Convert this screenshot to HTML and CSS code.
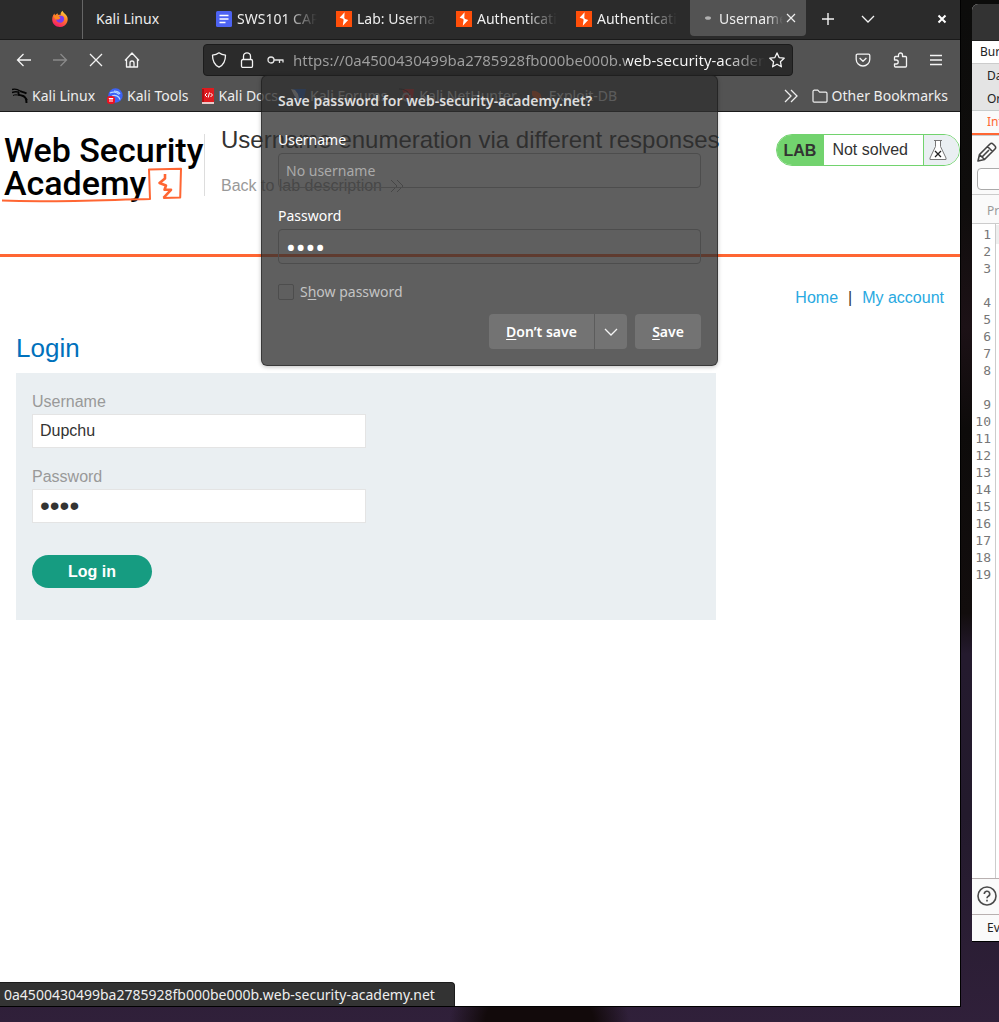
FILE: index.html
```
<!DOCTYPE html>
<html lang="en">
<head>
<meta charset="utf-8">
<title>Username enumeration via different responses</title>
<link rel="stylesheet" href="styles.css">
</head>
<body>
<svg class="defs" width="0" height="0" aria-hidden="true">
  <defs>
    <linearGradient id="fox" x1="0.8" y1="0" x2="0.3" y2="1"><stop offset="0" stop-color="#ffd93b"/><stop offset="0.45" stop-color="#ff7a2a"/><stop offset="1" stop-color="#f5156c"/></linearGradient>
    <symbol id="burp" viewBox="0 0 16 16"><rect width="16" height="16" fill="#ff4f0a"/><path d="M8.600 1.200 3.600 6.800l3.300.9.700 1-.8 6.100 5.400-5.800-3-.9-.9-1z" fill="#fff"/></symbol>
  </defs>
</svg>
<div class="desktop">
  <div class="browser">
    <div class="tabbar">
      <button class="pinned" aria-label="Firefox View">
        <svg width="18" height="18" viewBox="0 0 18 18"><path d="M9 17C4.500 17 1.200 13.800 1.200 9.500c0-2.500.8-4.500 2.200-6l.6 1.800 2.500-2 .5 1.600c.8-.2 1.700-.1 2.500.2C9.500 3.500 10 2 11.500.8c.3 2 3 3 4.300 5.200 1.200 2 1.100 4.300.3 6.300C14.900 15.200 12.300 17 9 17z" fill="url(#fox)"/><path d="M12.800 7.200c1 2.800-.7 5.600-3.600 5.600-2.300 0-4-1.500-4-3.500l2.500.1 1.600-1.600-1.500-1.600c2-.8 4-.3 5 1z" fill="#7a3cf0"/><path d="M2.200 5.600c1.800 0 3.200.2 5.600.6L9.400 8 7.500 9.300l-3 .3z" fill="#ff8a1f"/></svg>
      </button>
      <div class="tabs">
        <button class="tab"><span class="tab-title">Kali Linux</span></button>
        <button class="tab"><svg width="16" height="16" viewBox="0 0 16 16"><rect width="16" height="16" rx="1.500" fill="#4d63f2"/><path d="M3.500 4.500h9M3.500 8h9M3.500 11.500h6" stroke="#fff" stroke-width="1.600"/></svg><span class="tab-title">SWS101 CAP</span></button>
        <button class="tab"><svg width="16" height="16"><use href="#burp"/></svg><span class="tab-title">Lab: Username</span></button>
        <button class="tab"><svg width="16" height="16"><use href="#burp"/></svg><span class="tab-title">Authentication</span></button>
        <button class="tab"><svg width="16" height="16"><use href="#burp"/></svg><span class="tab-title">Authentication</span></button>
      </div>
      <div class="tab-active">
        <svg width="16" height="16" viewBox="0 0 16 16"><ellipse cx="8" cy="8" rx="3" ry="1.800" fill="#b0b0b0"/></svg>
        <span class="tab-title">Username</span>
        <button class="icon" aria-label="Close tab"><svg width="10" height="10" viewBox="0 0 10 10"><path d="M1 1l8 8M9 1 1 9" stroke="#eee" stroke-width="1.200"/></svg></button>
      </div>
      <button class="icon new-tab" aria-label="New tab"><svg width="14" height="14" viewBox="0 0 14 14"><path d="M7 1v12M1 7h12" stroke="#f4f4f4" stroke-width="1.400"/></svg></button>
      <button class="icon" aria-label="List tabs"><svg width="14" height="14" viewBox="0 0 14 14"><path d="M1 4l6 6 6-6" fill="none" stroke="#f4f4f4" stroke-width="1.300"/></svg></button>
      <button class="icon close-window" aria-label="Close window"><svg width="10" height="10" viewBox="0 0 10 10"><path d="M1.500 1.500l7 7M8.500 1.500l-7 7" stroke="#fff" stroke-width="2"/></svg></button>
    </div>
    <div class="toolbar">
      <div class="nav-buttons">
        <button class="icon" aria-label="Back"><svg width="16" height="16" viewBox="0 0 16 16" fill="none" stroke="#f4f4f4" stroke-width="1.300"><path d="M15 8H1.500M7.500 2l-6 6 6 6"/></svg></button>
        <button class="icon" aria-label="Forward"><svg width="16" height="16" viewBox="0 0 16 16" fill="none" stroke="#8a8a8a" stroke-width="1.300"><path d="M1 8h13.500M8.500 2l6 6-6 6"/></svg></button>
        <button class="icon" aria-label="Stop"><svg width="16" height="16" viewBox="0 0 16 16" stroke="#f4f4f4" stroke-width="1.300"><path d="M2 2l12 12M14 2 2 14"/></svg></button>
        <button class="icon" aria-label="Home"><svg width="16" height="16" viewBox="0 0 16 16" fill="none" stroke="#f4f4f4" stroke-width="1.300" stroke-linejoin="round"><path d="M1 8.500 8 1l7 7.500M2.500 7v8h11V7M6 15v-4a2 2 0 0 1 4 0v4"/></svg></button>
      </div>
      <div class="urlbar">
        <svg width="16" height="16" viewBox="0 0 16 16" fill="none" stroke="#f4f4f4" stroke-width="1.300" stroke-linejoin="round"><path d="M8 .8c2 1.600 4 2.200 6.500 2.400 0 5.300-1.500 9.500-6.500 12-5-2.500-6.500-6.700-6.500-12C4 3 6 2.400 8 .8z"/></svg>
        <svg width="16" height="16" viewBox="0 0 16 16" fill="none" stroke="#f4f4f4" stroke-width="1.300"><rect x="2.500" y="7.500" width="11" height="8" rx="1.500"/><path d="M4.500 7.500V4.300a3.500 3.500 0 0 1 7 0v3.200"/></svg>
        <svg width="17" height="16" viewBox="0 0 17 16" fill="none" stroke="#e4e4e4" stroke-width="1.300"><circle cx="4" cy="8" r="3"/><path d="M7 8h9.500M12.500 8v3M16 8v2.500"/></svg>
        <input class="url" type="text" aria-label="Address" value="https://0a4500430499ba2785928fb000be000b.web-security-academy.net/login">
        <button class="icon star" aria-label="Bookmark this page"><svg width="16" height="16" viewBox="0 0 16 16" fill="none" stroke="#f4f4f4" stroke-width="1.300" stroke-linejoin="round"><path d="M8 .9l2.100 4.700 5.100.6-3.800 3.500 1 5.100L8 12.200l-4.400 2.600 1-5.100L.8 6.200l5.100-.6z"/></svg></button>
      </div>
      <div class="tool-icons">
        <button class="icon" aria-label="Pocket"><svg width="16" height="16" viewBox="0 0 16 16" fill="none" stroke="#f4f4f4" stroke-width="1.300" stroke-linejoin="round"><path d="M2.500 2.200h11c.7 0 1.300.5 1.300 1.200v3.800a6.800 6.800 0 0 1-13.600 0V3.400c0-.7.600-1.200 1.300-1.200zM4.600 6 8 9.300 11.400 6"/></svg></button>
        <button class="icon" aria-label="Extensions"><svg width="16" height="16" viewBox="0 0 16 16" fill="none" stroke="#f4f4f4" stroke-width="1.300" stroke-linejoin="round"><path d="M2.500 8V5.500a1 1 0 0 1 1-1h3V3a2 2 0 0 1 4 0v1.500h3a1 1 0 0 1 1 1V14a1 1 0 0 1-1 1h-10a1 1 0 0 1-1-1v-2h1.700a2 2 0 0 0 0-4z"/></svg></button>
        <button class="icon" aria-label="Menu"><svg width="14" height="14" viewBox="0 0 14 14" stroke="#f4f4f4" stroke-width="1.300"><path d="M1 2.500h12M1 7h12M1 11.500h12"/></svg></button>
      </div>
    </div>
    <div class="bookmarks">
      <a href="#" class="bm"><svg width="16" height="16" viewBox="0 0 16 16" fill="none" stroke="#050505"><path stroke-width="1.400" d="M0 1.500c3-.8 5.500-.4 8 1.500M0 4.500c3-1.200 5-.9 7-.3"/><path stroke-width="1.900" d="M8 3.200c2 .8 4 .6 6.500 2.300M7 4c-1.500 2 0 3.200 2.500 3.400 3.500.4 5 2.600 5 7.600"/><path d="M9 7.500c2.500 2 5 1.500 6.500 4M1 7.500c2-1 4-.8 6 0"/></svg>Kali Linux</a>
      <a href="#" class="bm"><svg width="16" height="16" viewBox="0 0 16 16"><circle cx="8.500" cy="7.500" r="7.200" fill="#3d63f5"/><path d="M3 5c3-1.500 7-1 9 1.500M5 8c3-1.500 7 0 8 3.500M7 3c3 0 5 1 6 3" stroke="#b7d8ff" stroke-width="1.200" fill="none"/><rect y="8" width="8" height="8" rx="3" fill="#ee1020"/><path d="M1.800 10.500h4.400M3 10.500v3.500M5 10.500v3.500" stroke="#fff"/></svg>Kali Tools</a>
      <a href="#" class="bm"><svg width="14" height="16" viewBox="0 0 14 16"><path d="M1 0h12v14H1z" fill="#e01b1f"/><path d="M1 14h12v2H1z" fill="#e9c9c9"/><path d="M1 1h2v13H1z" fill="#b01014"/><path d="M6 5 4 7l2 2M9.500 5l2 2-2 2M8.500 4.500l-1.300 5" stroke="#fff" fill="none"/></svg>Kali Docs</a>
      <a href="#" class="bm"><svg width="16" height="16" viewBox="0 0 16 16"><path d="M3 1h13l-3 14H5z" fill="#2864c8"/><path d="M1 1l4 1 3 4 1 5 3 4-5-4-3-4z" fill="#e6e6e6"/></svg>Kali Forums</a>
      <a href="#" class="bm"><svg width="16" height="16" viewBox="0 0 16 16"><path d="M3 1h12l-1 9-6 4z" fill="#d82a2a"/><circle cx="7.500" cy="9" r="3.500" stroke="#bbb" stroke-width="2" fill="none"/><path d="M0 1c5 0 9 2 11 6" stroke="#222" fill="none"/></svg>Kali NetHunter</a>
      <a href="#" class="bm"><svg width="16" height="16" viewBox="0 0 16 16"><path d="M3 3c3-1 7 1 9 4l1 5C9 13 5 10 3 7z" fill="#ef5b20"/></svg>Exploit-DB</a>
      <div class="bm-end">
        <button class="icon" aria-label="More bookmarks"><svg width="14" height="14" viewBox="0 0 14 14" fill="none" stroke="#eee" stroke-width="1.300"><path d="M1 1l6 6-6 6M7 1l6 6-6 6"/></svg></button>
        <a href="#" class="bm"><svg width="16" height="16" viewBox="0 0 16 16" fill="none" stroke="#eee" stroke-width="1.200" stroke-linejoin="round"><path d="M1 13V3.500a1.300 1.300 0 0 1 1.300-1.300h3.500l1.800 2h6.200A1.300 1.300 0 0 1 15 5.500V13a1.200 1.200 0 0 1-1.200 1.200H2.200A1.200 1.200 0 0 1 1 13z"/></svg>Other Bookmarks</a>
      </div>
    </div>
    <main class="page">
      <header class="lab-header">
        <div class="logo">
          <div class="logo-text">Web Security<br>Academy</div>
          <svg class="logo-mark" width="184" height="44" viewBox="0 0 184 44" fill="none" stroke="#ff6633" stroke-width="2" stroke-linejoin="round"><path d="M1 38.500c50 2 100-.5 148-1.500L148 7.500l32-.8-.8 28.800-17 .6"/><path stroke-width="2.600" d="M164 12v4.500l-5.500 4.500 6.500 2.500-1.500 4.300h6.500l-7.500 8"/></svg>
        </div>
        <div class="lab-title">
          <h1>Username enumeration via different responses</h1>
          <a href="#">Back to lab description <svg width="14" height="12" viewBox="0 0 14 12" fill="none" stroke="#999"><path d="M1 0l6 6-6 6M7 0l6 6-6 6"/></svg></a>
        </div>
        <div class="lab-status">
          <span class="lab-tag">LAB</span>
          <span class="lab-state">Not solved</span>
          <span class="lab-flask"><svg width="18" height="22" viewBox="0 0 18 22" fill="#fff" stroke="#777"><path d="M5 1.500h8M6.500 1.500v6L1 19v1.500h16V19L11.500 7.500v-6"/><path d="M6 12l6 6M12 12l-6 6" stroke="#222" stroke-width="1.300"/></svg></span>
        </div>
      </header>
      <nav class="links"><a href="#">Home</a><span>|</span><a href="#">My account</a></nav>
      <section class="login">
        <h2>Login</h2>
        <form class="login-form">
          <label for="user">Username</label>
          <input id="user" type="text" value="Dupchu">
          <label for="pass">Password</label>
          <input id="pass" type="password" value="abcd">
          <button type="button">Log in</button>
        </form>
      </section>
    </main>
    <div class="statusbar">0a4500430499ba2785928fb000be000b.web-security-academy.net</div>
    <div class="popover" role="dialog" aria-labelledby="pop-title">
      <div class="pop-title" id="pop-title">Save password for web-security-academy.net?</div>
      <label for="pop-user">Username</label>
      <input class="pop-input" id="pop-user" type="text" placeholder="No username">
      <label for="pop-pass">Password</label>
      <input class="pop-input" id="pop-pass" type="password" value="abcd">
      <label class="show"><input type="checkbox"><span>S<u>h</u>ow password</span></label>
      <div class="pop-actions">
        <button class="dont"><span><u>D</u>on’t save</span></button>
        <button class="more" aria-label="More options"><svg width="14" height="14" viewBox="0 0 14 14"><path d="M1 4l6 6 6-6" fill="none" stroke="#f4f4f4" stroke-width="1.300"/></svg></button>
        <button class="save"><span><u>S</u>ave</span></button>
      </div>
    </div>
  </div>
  <div class="burp">
    <div class="burp-title"></div>
    <div class="burp-menu">Burp</div>
    <div class="burp-tabs"><span>Dashboard</span><span>Organizer</span></div>
    <div class="burp-tab-active">Intruder</div>
    <div class="burp-tools">
      <svg width="20" height="20" viewBox="0 0 20 20" fill="none" stroke="#444" stroke-width="1.600" stroke-linejoin="round"><path d="M1 19l1.500-6.500L13 2a2 2 0 0 1 3 0l2 2a2 2 0 0 1 0 3L7.500 17.500zM10.500 4.500l5 5M2.500 12.500l5 5M5.500 14.500 12 8"/></svg>
      <input type="text" aria-label="Target">
    </div>
    <div class="burp-view">Pretty</div>
    <div class="editor">
      <ol class="gutter">
        <li>1</li><li>2</li><li class="wrapped">3</li><li>4</li><li>5</li><li>6</li><li>7</li><li class="wrapped">8</li><li>9</li><li>10</li><li>11</li><li>12</li><li>13</li><li>14</li><li>15</li><li>16</li><li>17</li><li>18</li><li>19</li>
      </ol>
      <div class="code"></div>
    </div>
    <div class="burp-help"><svg width="20" height="20" viewBox="0 0 20 20" fill="none" stroke="#4a4a4a" stroke-width="1.600"><circle cx="10" cy="10" r="9"/><path d="M7.300 8a2.700 2.700 0 1 1 4 2.300c-.9.500-1.300.9-1.300 1.900M10 13.800v1.600"/></svg></div>
    <div class="burp-foot">Event log</div>
  </div>
</div>
</body>
</html>
```
FILE: styles.css
```
* { box-sizing: border-box; }
body { margin: 0; font-family: "Noto Sans", sans-serif; font-size: 14px; }
button { border: 0; padding: 0; background: none; font: inherit; color: inherit; }
a { text-decoration: none; color: inherit; }
svg { display: block; flex: none; }
.defs { position: absolute; }

.desktop {
  display: flex;
  gap: 11px;
  min-height: 100vh;
  overflow: hidden;
  background:
    radial-gradient(ellipse 90px 60px at 54% 100%, #120a0b 60%, transparent),
    linear-gradient(#0c0c0b 0, #0f0d0c 20%, #1c1116 32%, #0d0b0a 42%, #120d0d 60%, #241a2e 64%, #231a2c 80%, #30203a 100%);
}

.browser {
  position: relative;
  flex: 1;
  min-width: 0;
  margin-bottom: 15px;
  display: flex;
  flex-direction: column;
  border-right: 1px solid #000;
  border-bottom: 1px solid #000;
  color: #eee;
}
.icon { display: flex; align-items: center; justify-content: center; }

.tabbar {
  display: flex;
  align-items: center;
  height: 40px;
  padding-bottom: 2px;
  background: #2b2b2b;
  border-bottom: 1px solid #1a1a1a;
}
.pinned {
  width: 83px;
  height: 39px;
  margin-bottom: -2px;
  padding: 0 0 2px 51px;
  border-right: 1px solid #666;
}
.tabs { display: flex; padding-left: 2px; }
.tab {
  display: flex;
  align-items: center;
  gap: 5px;
  width: 120px;
  padding: 0 8px 0 11px;
  text-align: left;
}
.tab-title {
  flex: 1;
  overflow: hidden;
  white-space: nowrap;
  mask-image: linear-gradient(90deg, #000 60%, transparent);
}
.tab:first-child .tab-title { mask-image: none; }
.tab-active {
  display: flex;
  align-items: center;
  align-self: flex-start;
  gap: 3px;
  width: 116px;
  height: 36px;
  margin-left: 5px;
  padding: 0 10px;
  border-radius: 0 0 4px 4px;
  background: #535353;
}
.tab-active .tab-title { mask-image: linear-gradient(90deg, #000 75%, transparent); }
.new-tab { margin: 0 26px 0 15px; }
.close-window { margin-left: auto; margin-right: 13px; }

.toolbar { display: flex; align-items: center; height: 40px; background: #535353; }
.nav-buttons { display: flex; gap: 20px; width: 203px; padding-left: 16px; }
.urlbar {
  flex: 1;
  min-width: 0;
  display: flex;
  align-items: center;
  gap: 12px;
  height: 32px;
  padding: 0 7px;
  border: 1px solid #1c1c1c;
  border-radius: 4px;
  background: #2b2b2b;
}
.url {
  flex: 1;
  min-width: 0;
  margin: 0 -8px 0 -3px;
  padding: 0;
  border: 0;
  outline: 0;
  font: inherit;
  font-size: 15px;
  color: transparent;
  background: linear-gradient(90deg, #a0a0a0 333px, #f8f8f8 333px, #f8f8f8 calc(100% - 40px), #2b2b2b);
  background-clip: text;
  -webkit-background-clip: text;
}
.tool-icons { display: flex; gap: 21px; padding: 0 17px 0 62px; }

.bookmarks {
  display: flex;
  align-items: center;
  gap: 12px;
  height: 32px;
  padding: 0 12px;
  background: #535353;
  border-bottom: 1px solid #1a1a1a;
}
.bm { display: flex; align-items: center; gap: 4px; white-space: nowrap; }
.bm-end { display: flex; gap: 14px; margin-left: auto; }

.page {
  flex: 1;
  background: #fff;
  color: #333332;
  font-family: "Liberation Sans", Arial, sans-serif;
  font-size: 16px;
  line-height: 24px;
}
.lab-header {
  display: flex;
  align-items: flex-start;
  height: 145px;
  padding-top: 22px;
  border-bottom: 3px solid #ff6633;
}
.logo { position: relative; width: 205px; height: 62px; border-right: 1px solid #ddd; }
.logo-text {
  padding-left: 4px;
  color: #000;
  font: 500 34px/33px "Roboto", sans-serif;
  white-space: nowrap;
}
.logo-mark { position: absolute; left: 1px; top: 28px; }
.lab-title { flex: 1; padding-left: 16px; white-space: nowrap; }
.lab-title h1 { margin: -8px 0 22px; font-size: 24px; font-weight: 400; line-height: 28px; }
.lab-title a { display: flex; align-items: center; gap: 8px; line-height: 20px; color: #999; }
.lab-status { display: flex; height: 32px; line-height: 32px; border: 1px solid #72d36e; border-radius: 16px; overflow: hidden; }
.lab-status span { display: flex; align-items: center; }
.lab-tag { padding: 2px 8px 0 7px; background: #72d36e; font-weight: 700; }
.lab-state { padding: 0 15px 0 8px; border-right: 1px solid #72d36e; }
.lab-flask { padding: 0 12px 0 5px; background: #eaeff2; }

.links { display: flex; justify-content: flex-end; gap: 10px; padding: 29px 16px 0; }
.links a { color: #29a9e1; }
.login { width: 732px; max-width: 100%; padding: 23px 16px 0; }
.login h2 { margin: 0 0 10px; color: #0071bc; font-size: 26px; font-weight: 400; line-height: 30px; }
.login-form { padding: 16px 16px 32px; background: #eaeff2; }
.login-form label { display: block; line-height: 25px; color: #999; }
.login-form input {
  display: block;
  width: 50%;
  height: 34px;
  margin-bottom: 16px;
  padding: 0 7px;
  border: 1px solid #e4e4e4;
  background: #fff;
  color: #333332;
  font: inherit;
}
.login-form input[type="password"] { font-size: 28px; }
.login-form button {
  width: 120px;
  height: 33px;
  margin-top: 16px;
  border-radius: 17px;
  background: #169c81;
  color: #fff;
  font-weight: 700;
}

.statusbar {
  position: absolute;
  left: 0;
  bottom: 0;
  height: 24px;
  padding: 0 19px 0 4px;
  border-top: 1px solid #1c1c1c;
  border-right: 1px solid #1c1c1c;
  border-radius: 0 4px 0 0;
  background: #333;
  line-height: 23px;
}

.popover {
  position: absolute;
  left: 261px;
  top: 75px;
  width: 457px;
  padding: 16px;
  border: 1px solid rgba(20, 20, 20, 0.5);
  border-radius: 6px;
  background: rgba(47, 47, 47, 0.77);
  box-shadow: 0 1px 4px rgba(0, 0, 0, 0.25);
  color: #fff;
}
.pop-title { margin-bottom: 19px; font-weight: 600; line-height: 18px; color: #ddd; }
.popover label { display: block; line-height: 22px; }
.pop-input {
  display: block;
  width: 100%;
  height: 35px;
  margin: 2px 0 17px;
  padding: 0 7px;
  border: 1px solid #4d4d4d;
  border-radius: 4px;
  background: transparent;
  color: #fff;
  font: inherit;
}
.pop-input::placeholder { color: #aaa; opacity: 1; }
.pop-input[type="password"] { font-size: 26px; }
.popover .show { display: flex; align-items: center; gap: 6px; color: #c4c4c4; }
.show input { appearance: none; width: 16px; height: 16px; margin: 0; border: 1px solid #4d4d4d; border-radius: 2px; }
u { text-underline-offset: 2px; }
.pop-actions { display: flex; justify-content: flex-end; margin-top: 11px; }
.pop-actions button { height: 35px; background: #737373; font-weight: 600; }
.pop-actions .dont { width: 105px; border-radius: 4px 0 0 4px; }
.pop-actions .more { display: flex; align-items: center; justify-content: center; width: 33px; border-left: 1px solid #5c5c5c; border-radius: 0 4px 4px 0; }
.pop-actions .save { width: 66px; margin-left: 8px; border-radius: 4px; }

.burp {
  display: flex;
  flex: 0 0 27px;
  flex-direction: column;
  overflow: hidden;
  height: 938px;
  margin-top: 4px;
  border-bottom: 1px solid #000;
  border-radius: 6px 0 0 0;
  background: #fafafa;
  color: #222;
  font-size: 12px;
  white-space: nowrap;
}
.burp-title { flex: none; height: 37px; background: #333; border-bottom: 1px solid #222; }
.burp-menu { padding-left: 8px; line-height: 22px; background: #fff; border-bottom: 1px solid #ccc; }
.burp-tabs { display: flex; flex-direction: column; padding-left: 15px; line-height: 23px; background: #e4e4e4; border-bottom: 1px solid #c8cccc; }
.burp-tab-active { padding-left: 15px; line-height: 22px; color: #ff6633; border-bottom: 2px solid #ff6633; }
.burp-tools { padding: 6px 0 4px 5px; border-top: 1px solid #ccc; border-bottom: 1px solid #ccc; }
.burp-tools input { display: block; width: 120px; height: 22px; margin-top: 6px; border: 1px solid #aaa; border-radius: 4px; background: #fff; }
.burp-view { padding: 3px 0 0 15px; line-height: 25px; color: #999; border-bottom: 1px solid #ccc; }
.editor { display: flex; flex: 1; background: #fff; }
.gutter {
  flex: none;
  width: 24px;
  margin: 0;
  padding: 2px 4px 0 0;
  list-style: none;
  text-align: right;
  border-right: 1px solid #ccc;
  color: #777;
  font: 13px/17px "DejaVu Sans Mono", monospace;
}
.gutter .wrapped { padding-bottom: 17px; }
.code { flex: 1; height: 19px; margin-top: 1px; background: #eee; }
.burp-help { padding: 7px 0 8px 5px; border-top: 1px solid #b8b0b0; border-bottom: 1px solid #b8b0b0; }
.burp-foot { padding-left: 15px; line-height: 26px; }
```
